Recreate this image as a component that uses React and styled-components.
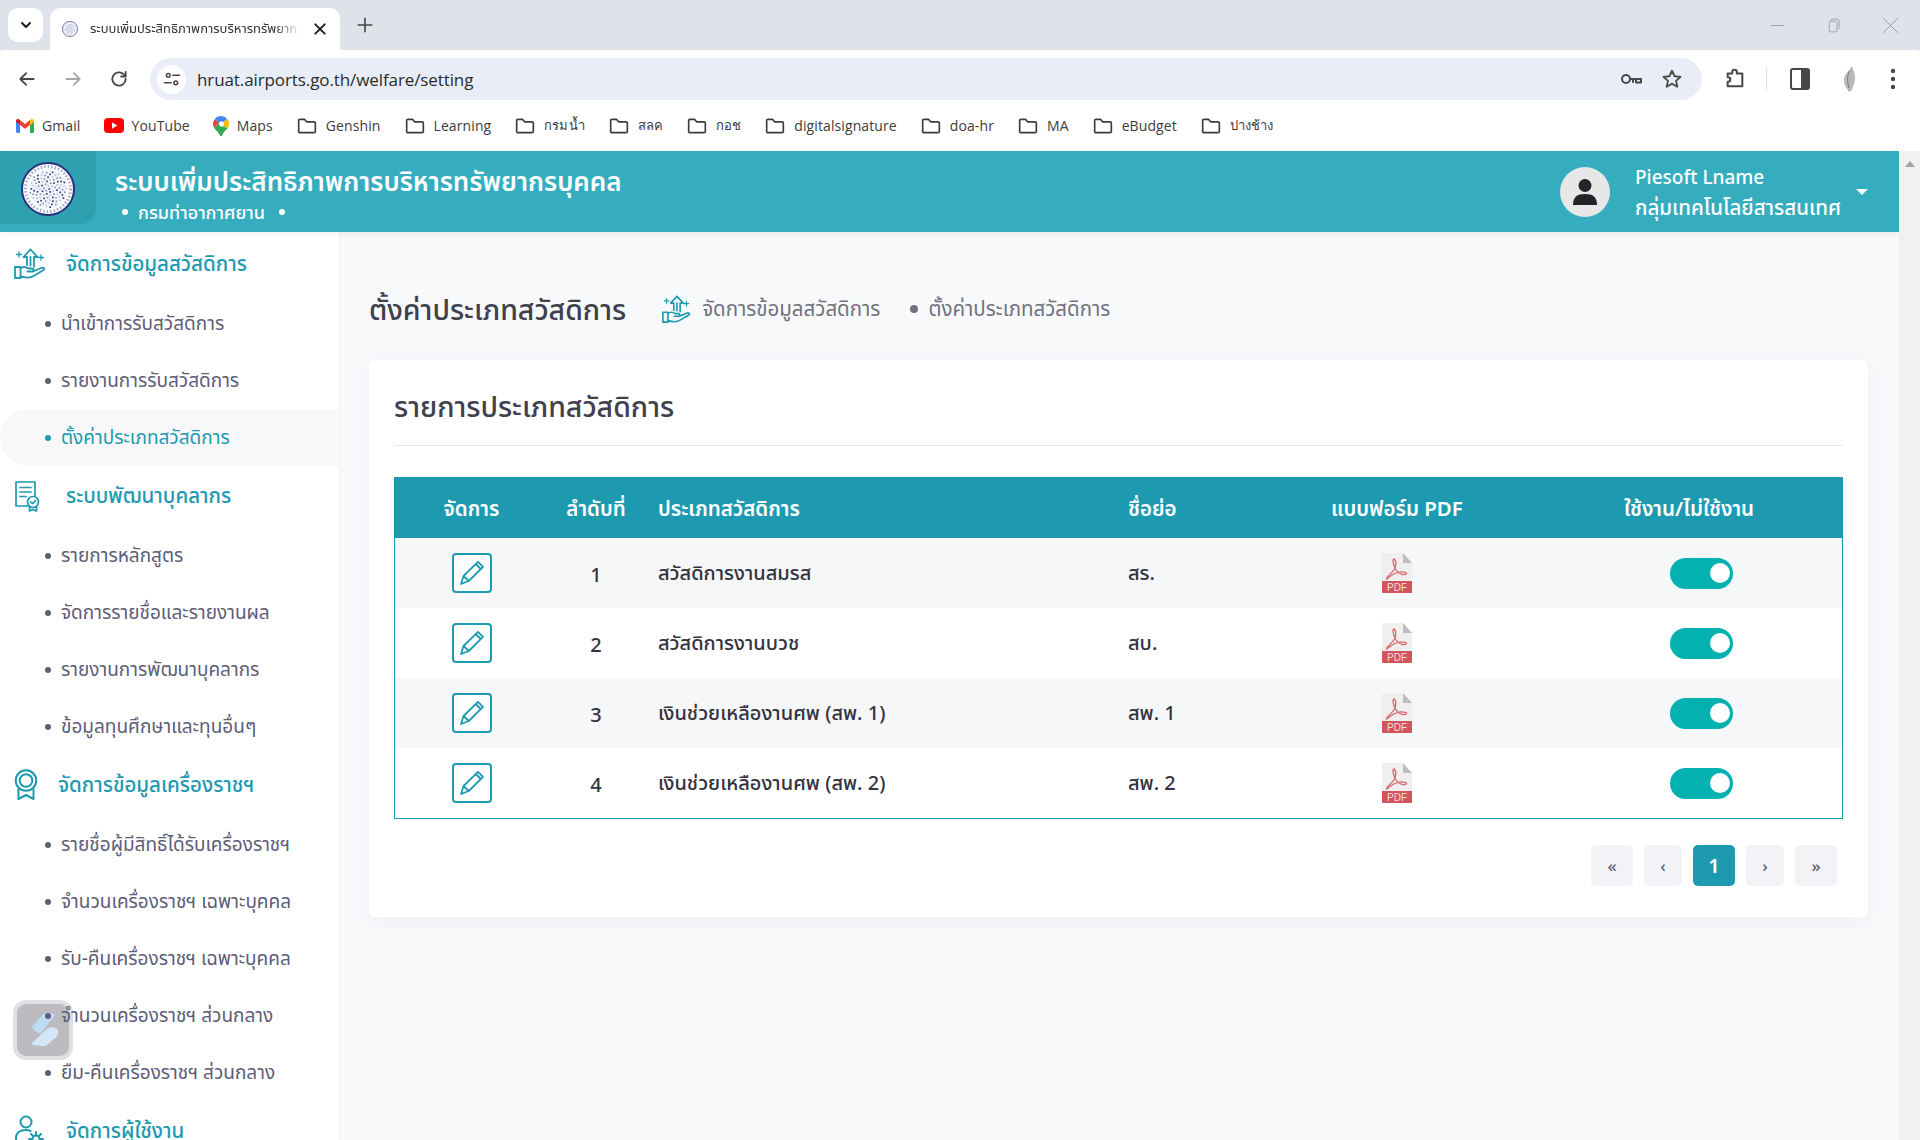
import React from 'react';
import styled, { createGlobalStyle } from 'styled-components';

const Global = createGlobalStyle`
  html, body { margin: 0; padding: 0; background: #f8f9fb; }
  * { box-sizing: border-box; }
  #root { width: 1920px; height: 1140px; overflow: hidden; }
  body { font-family: "Noto Sans", "Noto Sans Thai", "Open Sans", sans-serif; }
`;

const Page = styled.div`
  width: 1920px; height: 1140px; display: flex; flex-direction: column; position: relative; overflow: hidden;
`;

/* browser chrome */
const TabStrip = styled.div`
  height: 50px; flex: none; background: #dee3ea; display: flex; align-items: flex-start; padding: 8px 0 0 8px; color: #1f1f1f;
`;
const TabMenu = styled.div`
  width: 35px; height: 34px; border-radius: 10px; background: #fff; display: flex; align-items: center; justify-content: center;
`;
const Tab = styled.div`
  width: 290px; height: 42px; margin-left: 7px; background: #fff; border-radius: 10px 10px 0 0; display: flex; align-items: center; padding: 0 12px;
`;
const TabTitle = styled.span`
  width: 211px; margin-left: 12px; font-size: 13px; white-space: nowrap; overflow: hidden; color: #333;
  -webkit-mask-image: linear-gradient(90deg, #000 88%, transparent);
  mask-image: linear-gradient(90deg, #000 88%, transparent);
`;
const TabClose = styled.div`
  margin-left: 12px; display: flex; align-items: center;
`;
const NewTab = styled.div`
  margin: 8px 0 0 16px; display: flex; color: #474747;
`;
const WindowControls = styled.div`
  margin-left: auto; height: 34px; display: flex; align-items: center; gap: 39px; padding-right: 20px; color: #8a8d93;
`;
const Toolbar = styled.div`
  height: 50px; flex: none; background: #fff; border-radius: 10px 10px 0 0; display: flex; align-items: flex-start; color: #474747; padding-top: 8px;
`;
const NavIcon = styled.div`
  width: ${p => p.$w || 46}px; height: 42px; display: flex; align-items: center; justify-content: center; flex: none; color: ${p => p.$dim ? '#a6a8ab' : 'inherit'};
`;
const NavGroup = styled.div`
  display: flex; padding-left: 4px; width: 150px;
`;
const Omnibox = styled.div`
  width: 1552px; height: 42px; background: #e9edf7; border-radius: 21px; display: flex; align-items: center; padding: 0 19px 0 7px; flex: none;
`;
const SiteInfo = styled.div`
  width: 29px; height: 29px; border-radius: 50%; background: #fff; display: flex; align-items: center; justify-content: center; flex: none;
`;
const Url = styled.span`
  margin-left: 11px; font-family: "Open Sans", sans-serif; font-size: 17px; color: #2b2b2b; flex: 1; letter-spacing: -0.1px;
`;
const OmniIcons = styled.div`
  display: flex; align-items: center; gap: 18px;
`;
const ToolRight = styled.div`
  display: flex; align-items: center; height: 42px; padding-left: 18px; flex: 1;
`;
const ToolSep = styled.div`
  width: 1px; height: 22px; background: #d3def2; margin: 0 18px 0 16px;
`;
const ToolSlot = styled.div`
  width: ${p => p.$w}px; display: flex; justify-content: center; align-items: center; flex: none;
`;
const Bookmarks = styled.div`
  height: 51px; flex: none; background: #fff; display: flex; align-items: center; gap: 23px; padding: 0 0 0 16px; color: #474747;
`;
const Bookmark = styled.div`
  display: flex; align-items: center; gap: 8px; font-family: "Open Sans", sans-serif; font-size: 14px; letter-spacing: 0.1px; color: #3c3c3c; white-space: nowrap;
`;
const BookmarkThai = styled(Bookmark)`
  font-size: 13px;
`;

/* app */
const Header = styled.header`
  height: 81px; flex: none; width: 1899px; background: #35adbf; display: flex; align-items: center; color: #fff; position: relative; z-index: 2;
  box-shadow: 0 2px 6px rgba(0,0,0,.06);
`;
const LogoBox = styled.div`
  width: 96px; height: 73px; align-self: flex-start; background: #2fa0b0; border-radius: 0 0 16px 0; display: flex; align-items: center; justify-content: center; padding-top: 3px;
`;
const Brand = styled.div`
  margin-left: 19px; padding-top: 6px; display: flex; flex-direction: column;
`;
const BrandTitle = styled.div`
  font-size: 26px; font-weight: 600; line-height: 35px; white-space: nowrap;
`;
const BrandSub = styled.div`
  display: flex; align-items: center; font-size: 18px; font-weight: 500; line-height: 27px; padding-left: 7px; gap: 10px;
  &::before, &::after { content: ""; width: 6px; height: 6px; background: #fff; border-radius: 50%; }
  &::after { margin-left: 4px; }
`;
const UserArea = styled.div`
  margin-left: auto; display: flex; align-items: center; padding-right: 31px;
`;
const Avatar = styled.div`
  width: 50px; height: 50px; border-radius: 50%; background: #e7e7e7; display: flex; align-items: center; justify-content: center;
`;
const UserText = styled.div`
  margin-left: 25px; display: flex; flex-direction: column; font-size: 20.5px; line-height: 30px; font-weight: 500;
`;
const UserName = styled.span`
  font-size: 19px; padding-top: 1px;
`;
const Caret = styled.div`
  margin-left: 15px; width: 0; height: 0; border-left: 6px solid transparent; border-right: 6px solid transparent; border-top: 6px solid #fff;
`;
const Body = styled.div`
  flex: 1; min-height: 0; display: flex;
`;
const Sidebar = styled.aside`
  width: 340px; flex: none; background: #fff; border-right: 1px solid #f1f1f4; padding-top: 1.5px; overflow: hidden;
`;
const Section = styled.div`
  height: 61px; display: flex; align-items: center; color: #1d9ab0; font-size: 20.5px; font-weight: 500; white-space: nowrap;
`;
const SectionIcon = styled.div`
  width: ${p => p.$w || 66}px; flex: none; padding-left: 14px; display: flex; align-items: center;
`;
const SubItem = styled.div`
  height: 57px; display: flex; align-items: center; padding: 2px 0 0 45px; gap: 10px; font-size: 19px; white-space: nowrap; position: relative; z-index: 6;
  color: ${p => p.$active ? '#1d9ab0' : '#5d5d78'};
  background: ${p => p.$active ? '#f8f8fb' : 'transparent'};
  border-radius: 28px 0 0 28px;
  &::before { content: ""; width: 6px; height: 6px; border-radius: 50%; background: currentColor; flex: none; }
`;
const Main = styled.main`
  flex: 1; min-width: 0; padding: 54px 31px 0 29px; background: #f8f9fb;
`;
const Scrollbar = styled.div`
  width: 21px; flex: none; background: #f1f1f1; display: flex; justify-content: center; align-self: stretch; margin-top: -81px; position: relative; z-index: 3;
`;
const ScrollArrow = styled.div`
  margin-top: 10px; width: 0; height: 0; border-left: 5px solid transparent; border-right: 5px solid transparent; border-bottom: 6px solid #a3a3a3;
`;
const PageHead = styled.div`
  height: 50px; display: flex; align-items: center; margin-bottom: 24px;
`;
const PageTitle = styled.h1`
  margin: 0; font-size: 28.5px; font-weight: 500; color: #3f3f4d; white-space: nowrap;
`;
const Crumb = styled.div`
  display: flex; align-items: center; margin-left: 36px; gap: 11px; font-size: 20.5px; color: #72727f; margin-top: -4px; white-space: nowrap;
`;
const CrumbDot = styled.span`
  width: 8px; height: 8px; border-radius: 50%; background: #72727f; margin: 0 -1px 0 19px;
`;
const Card = styled.section`
  background: #fff; border-radius: 6px; padding: 0 25px 31px; box-shadow: 0 4px 20px rgba(60,60,90,.05); height: 557px;
`;
const CardHead = styled.div`
  height: 86px; border-bottom: 1px solid #e4e6ea; display: flex; align-items: center; padding-top: 12px; margin-bottom: 31px;
`;
const CardTitle = styled.h2`
  margin: 0; font-size: 28.5px; font-weight: 500; color: #40404f;
`;
const TableWrap = styled.div`
  border: 1px solid #1d9ab0;
`;
const Table = styled.table`
  width: 100%; border-collapse: collapse; table-layout: fixed; color: #33333f; font-size: 20px;
`;
const Th = styled.th`
  height: 60px; background: #1d9ab0; color: #fff; font-size: 20.5px; font-weight: 600; padding: 2px 14px 0; text-align: ${p => p.$left ? 'left' : 'center'}; white-space: nowrap;
`;
const Row = styled.tr`
  background: ${p => p.$odd ? '#f6f7f9' : '#fff'};
`;
const Td = styled.td`
  height: 70px; padding: 2px 14px 0; text-align: ${p => p.$left ? 'left' : 'center'}; font-weight: 500;
`;
const IconTd = styled.td`
  height: 70px; padding: 0 14px;
`;
const EditBtn = styled.div`
  width: 40px; height: 40px; margin: 0 auto; border: 2px solid #1d9ab0; border-radius: 4px; background: #fff; color: #1d9ab0; display: flex; align-items: center; justify-content: center;
`;
const Toggle = styled.div`
  width: 63px; height: 31px; margin-left: 120px; border-radius: 16px; background: #03b2b0; display: flex; align-items: center; justify-content: flex-end; padding-right: 3px;
  &::after { content: ""; width: 20px; height: 20px; background: #fff; border-radius: 50%; }
`;
const Pager = styled.div`
  display: flex; justify-content: flex-end; gap: 11px; margin-top: 26px; padding-right: 6px;
`;
const PageBtn = styled.div`
  width: ${p => p.$w}px; height: 41px; border-radius: 5px; display: flex; align-items: center; justify-content: center;
  font-size: ${p => p.$active ? 20 : 17}px; font-weight: ${p => p.$active ? 600 : 500};
  background: ${p => p.$active ? '#1d9ab0' : '#f2f2f7'}; color: ${p => p.$active ? '#fff' : '#5d5d78'};
`;
const Widget = styled.div`
  position: absolute; left: 13px; top: 1000px; width: 60px; height: 60px; border-radius: 13px; border: 4px solid #e0e0e2; background: #bbbbc0; z-index: 5;
`;
const WidgetMark = styled.svg`
  display: block; margin: -4px;
`;

/* icons */
const Sv = ({ w = 20, h = 20, vb = '0 0 24 24', children, sw = 2 }) => (
  <svg width={w} height={h} viewBox={vb} fill="none" stroke="currentColor" strokeWidth={sw} strokeLinecap="round" strokeLinejoin="round">{children}</svg>
);
const Folder = () => (
  <Sv w={22} h={20} sw={2}><path d="M2 5.500C2 4.500 2.700 4 3.500 4H9l2.500 3h9c.8 0 1.500.6 1.500 1.500v10c0 .9-.7 1.500-1.500 1.500h-17C2.700 20 2 19.400 2 18.500z" /></Sv>
);
const Gmail = () => (
  <svg width="18" height="14" viewBox="0 0 18 14">
    <path d="M0 2v10.500C0 13.300.7 14 1.500 14H4V6z" fill="#4285f4" />
    <path d="M18 2v10.500c0 .8-.7 1.500-1.500 1.500H14V6z" fill="#34a853" />
    <path d="M4 6V1L9 5l5-4v5L9 9.800z" fill="#ea4335" />
    <path d="M0 2C0 .3 2-.5 3 .3L4 1v5L0 3z" fill="#c5221f" />
    <path d="M18 2c0-1.700-2-2.500-3-1.700L14 1v5l4-3z" fill="#fbbc04" />
  </svg>
);
const YouTube = () => (
  <svg width="20" height="15" viewBox="0 0 20 15"><rect width="20" height="15" rx="4" fill="#f00" /><path d="M8 4.300l5.200 3.200L8 10.700z" fill="#fff" /></svg>
);
const Maps = () => (
  <svg width="16" height="20" viewBox="0 0 16 20">
    <path d="M1.800 3A7.900 7.900 0 0 0 0 8c0 1.500.4 2.700 1 3.800L6 7z" fill="#ea4335" />
    <path d="M8 0C5.500 0 3.300 1.100 1.800 3L6 7a2.700 2.700 0 0 1 4-1l4.200-3A8 8 0 0 0 8 0z" fill="#4285f4" />
    <path d="M14.200 3L10 6a2.700 2.700 0 0 1-.8 4.500L14.700 12c.9-1.300 1.300-2.600 1.300-4 0-1.900-.7-3.600-1.800-5z" fill="#fbbc04" />
    <path d="M1 11.800c1.400 2.700 4.700 4.200 6.100 8.200h1.800c.8-2.600 2.500-4.300 4-6l1.800-2-5.500-1.500A2.800 2.800 0 0 1 6 7z" fill="#34a853" />
  </svg>
);
const speckles = Array.from({ length: 90 }, (_, i) => {
  const a = i * 2.39996;
  const r = 18.5 * Math.sqrt((i + 0.5) / 90);
  return { x: 27 + r * Math.cos(a), y: 27 + r * Math.sin(a), c: i % 3 === 0 ? '#28307e' : i % 3 === 1 ? '#7f88bb' : '#b7bcd9' };
});
const Seal = ({ s = 54 }) => (
  <svg width={s} height={s} viewBox="0 0 54 54">
    <circle cx="27" cy="27" r="26" fill="#fff" stroke="#28307e" strokeWidth="2" />
    <circle cx="27" cy="27" r="22.500" fill="none" stroke="#5a639c" strokeWidth="3" strokeDasharray="1.500 2" opacity=".55" />
    <circle cx="27" cy="27" r="19.500" fill="#f4f5fa" />
    {speckles.map((d, i) => <rect key={i} x={d.x - 0.8} y={d.y - 0.8} width="1.600" height="1.600" fill={d.c} />)}
  </svg>
);
const HandIcon = ({ s = 32 }) => (
  <svg width={s} height={s} viewBox="0 0 32 32" fill="none" stroke="#1d9ab0" strokeWidth="1.800" strokeLinecap="round" strokeLinejoin="round">
    <path d="M16.500 1.500l-7 7.500H13v8M16.500 1.500l7 7.500H20v9.500" />
    <path d="M16.500 9v8.500" />
    <path d="M1 19h5.500v11H1zM6.500 20.500c3-2.500 5-2 8 0h4c1.500 0 1.500 3 0 3h-5M6.500 28c6 2.500 10 2 14-.5l9-5.500c1.500-1.200 0-3-1.800-2.200L19 23.500" />
    <path d="M5 4v5M2.500 6.500h5M27 7v5M24.500 9.500h5" strokeWidth="1.300" />
  </svg>
);
const DocIcon = () => (
  <svg width="26" height="32" viewBox="0 0 26 32" fill="none" stroke="#1d9ab0" strokeWidth="1.700" strokeLinecap="round" strokeLinejoin="round">
    <path d="M14 26H2V2h19v14" />
    <path d="M6 7.500h11M6 12h11M6 16.500h6" />
    <circle cx="19" cy="22" r="5.500" />
    <path d="M16.800 22l1.700 1.700 3-3.200M15.500 27v4l3.500-1.600 3.500 1.600v-4" />
  </svg>
);
const MedalIcon = () => (
  <svg width="24" height="32" viewBox="0 0 24 32" fill="none" stroke="#1d9ab0" strokeWidth="2" strokeLinejoin="round">
    <circle cx="12" cy="11.500" r="10.300" />
    <circle cx="12" cy="11.500" r="6.300" />
    <path d="M4.500 19.500V30l7.500-4 7.500 4V19.500" />
  </svg>
);
const UserGearIcon = () => (
  <svg width="30" height="32" viewBox="0 0 30 32" fill="none" stroke="#1d9ab0" strokeWidth="2" strokeLinecap="round">
    <circle cx="12" cy="7" r="5.500" />
    <path d="M2 26v-3c0-5 4-8 10-8 2 0 3 .2 4.500 1" />
    <circle cx="22" cy="24" r="3.500" />
    <path d="M22 17v2.500M22 28.500V31M15 24h2.500M26.500 24H29M17 19l1.800 1.800M25.200 27.200L27 29M27 19l-1.800 1.800M18.800 27.200L17 29" />
  </svg>
);
const Pencil = () => (
  <svg width="26" height="26" viewBox="0 0 26 26" fill="none" stroke="currentColor" strokeWidth="1.800" strokeLinejoin="round">
    <path d="M2 24l2.500-8L19 1.800l5 5L9.800 21z" />
    <path d="M4.500 16l5.300 5M16.700 4l5 5" />
  </svg>
);
const PdfIcon = () => (
  <svg width="30" height="40" viewBox="0 0 30 40" style={{ display: 'block', margin: '0 auto' }}>
    <path d="M0 1a1 1 0 0 1 1-1h20l9 10v19H0z" fill="#efefef" />
    <path d="M21 0l9 10h-9z" fill="#bdbdbd" />
    <path d="M0 28h30v11a1 1 0 0 1-1 1H1a1 1 0 0 1-1-1z" fill="#d2555c" />
    <path d="M4.500 26c0-3 5-4.500 8-10 1.500-3 2-8-.2-10-2-.5-1.800 5 1.500 10.500 2 3 4 4.500 7 5 3 .5 5-1 3-2-3-1-8-.5-12 1.500-3 1.500-7 5-7.300 5z" fill="none" stroke="#d9656c" strokeWidth="1.300" />
    <text x="15" y="37.500" fill="#f6dfe0" fontSize="10" fontWeight="500" textAnchor="middle" fontFamily="Liberation Sans, sans-serif">PDF</text>
  </svg>
);

const sections = [
  { title: 'จัดการข้อมูลสวัสดิการ', icon: <HandIcon />, items: ['นำเข้าการรับสวัสดิการ', 'รายงานการรับสวัสดิการ', 'ตั้งค่าประเภทสวัสดิการ'], active: 2 },
  { title: 'ระบบพัฒนาบุคลากร', icon: <DocIcon />, items: ['รายการหลักสูตร', 'จัดการรายชื่อและรายงานผล', 'รายงานการพัฒนาบุคลากร', 'ข้อมูลทุนศึกษาและทุนอื่นๆ'] },
  { title: 'จัดการข้อมูลเครื่องราชฯ', icon: <MedalIcon />, w: 58, items: ['รายชื่อผู้มีสิทธิ์ได้รับเครื่องราชฯ', 'จำนวนเครื่องราชฯ เฉพาะบุคคล', 'รับ-คืนเครื่องราชฯ เฉพาะบุคคล', 'จำนวนเครื่องราชฯ ส่วนกลาง', 'ยืม-คืนเครื่องราชฯ ส่วนกลาง'] },
  { title: 'จัดการผู้ใช้งาน', icon: <UserGearIcon />, items: [] },
];
const rows = [
  ['1', 'สวัสดิการงานสมรส', 'สร.'],
  ['2', 'สวัสดิการงานบวช', 'สบ.'],
  ['3', 'เงินช่วยเหลืองานศพ (สพ. 1)', 'สพ. 1'],
  ['4', 'เงินช่วยเหลืองานศพ (สพ. 2)', 'สพ. 2'],
];
const folders = ['Genshin', 'Learning', 'กรมน้ำ', 'สลค', 'กอช', 'digitalsignature', 'doa-hr', 'MA', 'eBudget', 'ปางช้าง'];
const isThai = s => /[\u0E00-\u0E7F]/.test(s);

export default function App() {
  return (
    <Page>
      <Global />
      <TabStrip>
        <TabMenu><Sv w={16} h={16} sw={3}><path d="M6 9l6 6 6-6" /></Sv></TabMenu>
        <Tab>
          <Seal s={16} />
          <TabTitle>ระบบเพิ่มประสิทธิภาพการบริหารทรัพยากรบุคคล</TabTitle>
          <TabClose><Sv w={16} h={16} sw={3}><path d="M5 5l14 14M19 5L5 19" /></Sv></TabClose>
        </Tab>
        <NewTab><Sv w={18} h={18} sw={2.200}><path d="M12 3v18M3 12h18" /></Sv></NewTab>
        <WindowControls>
          <Sv w={17} h={17} sw={1}><path d="M3 12h18" /></Sv>
          <Sv w={17} h={17} sw={1}><rect x="6" y="6" width="11" height="15" rx="2" /><path d="M9 3h8c2 0 3 1 3 3v10" /></Sv>
          <Sv w={19} h={19} sw={1}><path d="M3 3l18 18M21 3L3 21" /></Sv>
        </WindowControls>
      </TabStrip>
      <Toolbar>
        <NavGroup>
          <NavIcon><Sv w={20} h={20} sw={2.200}><path d="M20 12H5M11 5l-7 7 7 7" /></Sv></NavIcon>
          <NavIcon $dim><Sv w={20} h={20} sw={2.200}><path d="M4 12h15M13 5l7 7-7 7" /></Sv></NavIcon>
          <NavIcon><Sv w={20} h={20} sw={2.200}><path d="M20 12a8 8 0 1 1-2.500-5.800L20 9M20 3.500V9h-5.500" /></Sv></NavIcon>
        </NavGroup>
        <Omnibox>
          <SiteInfo><Sv w={18} h={18} sw={2}><circle cx="7" cy="7" r="2.500" /><path d="M13 7h9M2 17h9" /><circle cx="17" cy="17" r="2.500" /></Sv></SiteInfo>
          <Url>hruat.airports.go.th/welfare/setting</Url>
          <OmniIcons>
            <Sv w={24} h={24} sw={2}><circle cx="7" cy="12" r="4" /><path d="M11 12h11v3.500h-5V12M14 12v3" /></Sv>
            <Sv w={22} h={22} sw={2}><path d="M12 3l2.800 6 6.500.7-4.900 4.300 1.400 6.500L12 17.200 6.200 20.500l1.400-6.500L2.700 9.700 9.200 9z" /></Sv>
          </OmniIcons>
        </Omnibox>
        <ToolRight>
          <ToolSlot $w={30}><Sv w={22} h={24} sw={2.200}><path d="M4 6h5V4.500a2.500 2.500 0 0 1 5 0V6h6v14H4v-5c2.500 0 3-1 3-2.500S6.500 10 4 10z" /></Sv></ToolSlot>
          <ToolSep />
          <ToolSlot $w={30}><svg width="20" height="22" viewBox="0 0 20 22"><rect x="1" y="1" width="18" height="20" rx="2" fill="none" stroke="#474747" strokeWidth="2" /><rect x="11" y="1" width="8" height="20" fill="#474747" /></svg></ToolSlot>
          <ToolSlot $w={68}><svg width="16" height="28" viewBox="0 0 16 28"><path d="M11 1c1 4 4 8 3 14-1 4-2 6-3 10l-3 2c-1-3-5-5-5-12C3 9 8 6 11 1z" fill="#b9bab8" /><path d="M9 6c-3 4-3 10-1 17" stroke="#777" fill="none" /></svg></ToolSlot>
          <ToolSlot $w={20}><svg width="6" height="22" viewBox="0 0 6 22"><circle cx="3" cy="3" r="2.200" fill="#474747" /><circle cx="3" cy="11" r="2.200" fill="#474747" /><circle cx="3" cy="19" r="2.200" fill="#474747" /></svg></ToolSlot>
        </ToolRight>
      </Toolbar>
      <Bookmarks>
        <Bookmark><Gmail />Gmail</Bookmark>
        <Bookmark><YouTube />YouTube</Bookmark>
        <Bookmark><Maps />Maps</Bookmark>
        {folders.map(f => {
          const B = isThai(f) ? BookmarkThai : Bookmark;
          return <B key={f}><Folder />{f}</B>;
        })}
      </Bookmarks>
      <Header>
        <LogoBox><Seal /></LogoBox>
        <Brand>
          <BrandTitle>ระบบเพิ่มประสิทธิภาพการบริหารทรัพยากรบุคคล</BrandTitle>
          <BrandSub>กรมท่าอากาศยาน</BrandSub>
        </Brand>
        <UserArea>
          <Avatar><svg width="26" height="28" viewBox="0 0 26 28"><circle cx="13" cy="7.500" r="6.500" fill="#22242a" /><path d="M1 27c0-8 4-11 12-11s12 3 12 11z" fill="#22242a" /></svg></Avatar>
          <UserText><UserName>Piesoft Lname</UserName><span>กลุ่มเทคโนโลยีสารสนเทศ</span></UserText>
          <Caret />
        </UserArea>
      </Header>
      <Body>
        <Sidebar>
          {sections.map(s => (
            <React.Fragment key={s.title}>
              <Section><SectionIcon $w={s.w}>{s.icon}</SectionIcon>{s.title}</Section>
              {s.items.map((it, i) => <SubItem key={it} $active={s.active === i}>{it}</SubItem>)}
            </React.Fragment>
          ))}
        </Sidebar>
        <Main>
          <PageHead>
            <PageTitle>ตั้งค่าประเภทสวัสดิการ</PageTitle>
            <Crumb><HandIcon s={29} />จัดการข้อมูลสวัสดิการ<CrumbDot />ตั้งค่าประเภทสวัสดิการ</Crumb>
          </PageHead>
          <Card>
            <CardHead><CardTitle>รายการประเภทสวัสดิการ</CardTitle></CardHead>
            <TableWrap>
              <Table>
                <colgroup>
                  <col style={{ width: 153 }} /><col style={{ width: 96 }} /><col style={{ width: 470 }} /><col style={{ width: 144 }} /><col style={{ width: 278 }} /><col />
                </colgroup>
                <thead>
                  <tr>
                    <Th>จัดการ</Th><Th>ลำดับที่</Th><Th $left>ประเภทสวัสดิการ</Th><Th $left>ชื่อย่อ</Th><Th>แบบฟอร์ม PDF</Th><Th>ใช้งาน/ไม่ใช้งาน</Th>
                  </tr>
                </thead>
                <tbody>
                  {rows.map((r, i) => (
                    <Row key={r[0]} $odd={i % 2 === 0}>
                      <IconTd><EditBtn><Pencil /></EditBtn></IconTd>
                      <Td>{r[0]}</Td>
                      <Td $left>{r[1]}</Td>
                      <Td $left>{r[2]}</Td>
                      <IconTd><PdfIcon /></IconTd>
                      <IconTd><Toggle /></IconTd>
                    </Row>
                  ))}
                </tbody>
              </Table>
            </TableWrap>
            <Pager>
              <PageBtn $w={42}>«</PageBtn>
              <PageBtn $w={38}>‹</PageBtn>
              <PageBtn $w={42} $active>1</PageBtn>
              <PageBtn $w={38}>›</PageBtn>
              <PageBtn $w={42}>»</PageBtn>
            </Pager>
          </Card>
        </Main>
        <Scrollbar><ScrollArrow /></Scrollbar>
      </Body>
      <Widget>
        <WidgetMark width="60" height="60" viewBox="0 0 60 60">
          <path d="M18.700 26.700L31 13.500c2-1.500 8-1 11 1.500L28 33c-2 .8-7-2-9.300-6.300z" fill="#bcdcf4" />
          <path d="M18 44L35 28c3-1.500 8-1 10 2 .8 2.500 0 5-1.500 7L33 45.700c-4 .8-11 0-15-1.700z" fill="#d3e7f8" />
        </WidgetMark>
      </Widget>
    </Page>
  );
}
